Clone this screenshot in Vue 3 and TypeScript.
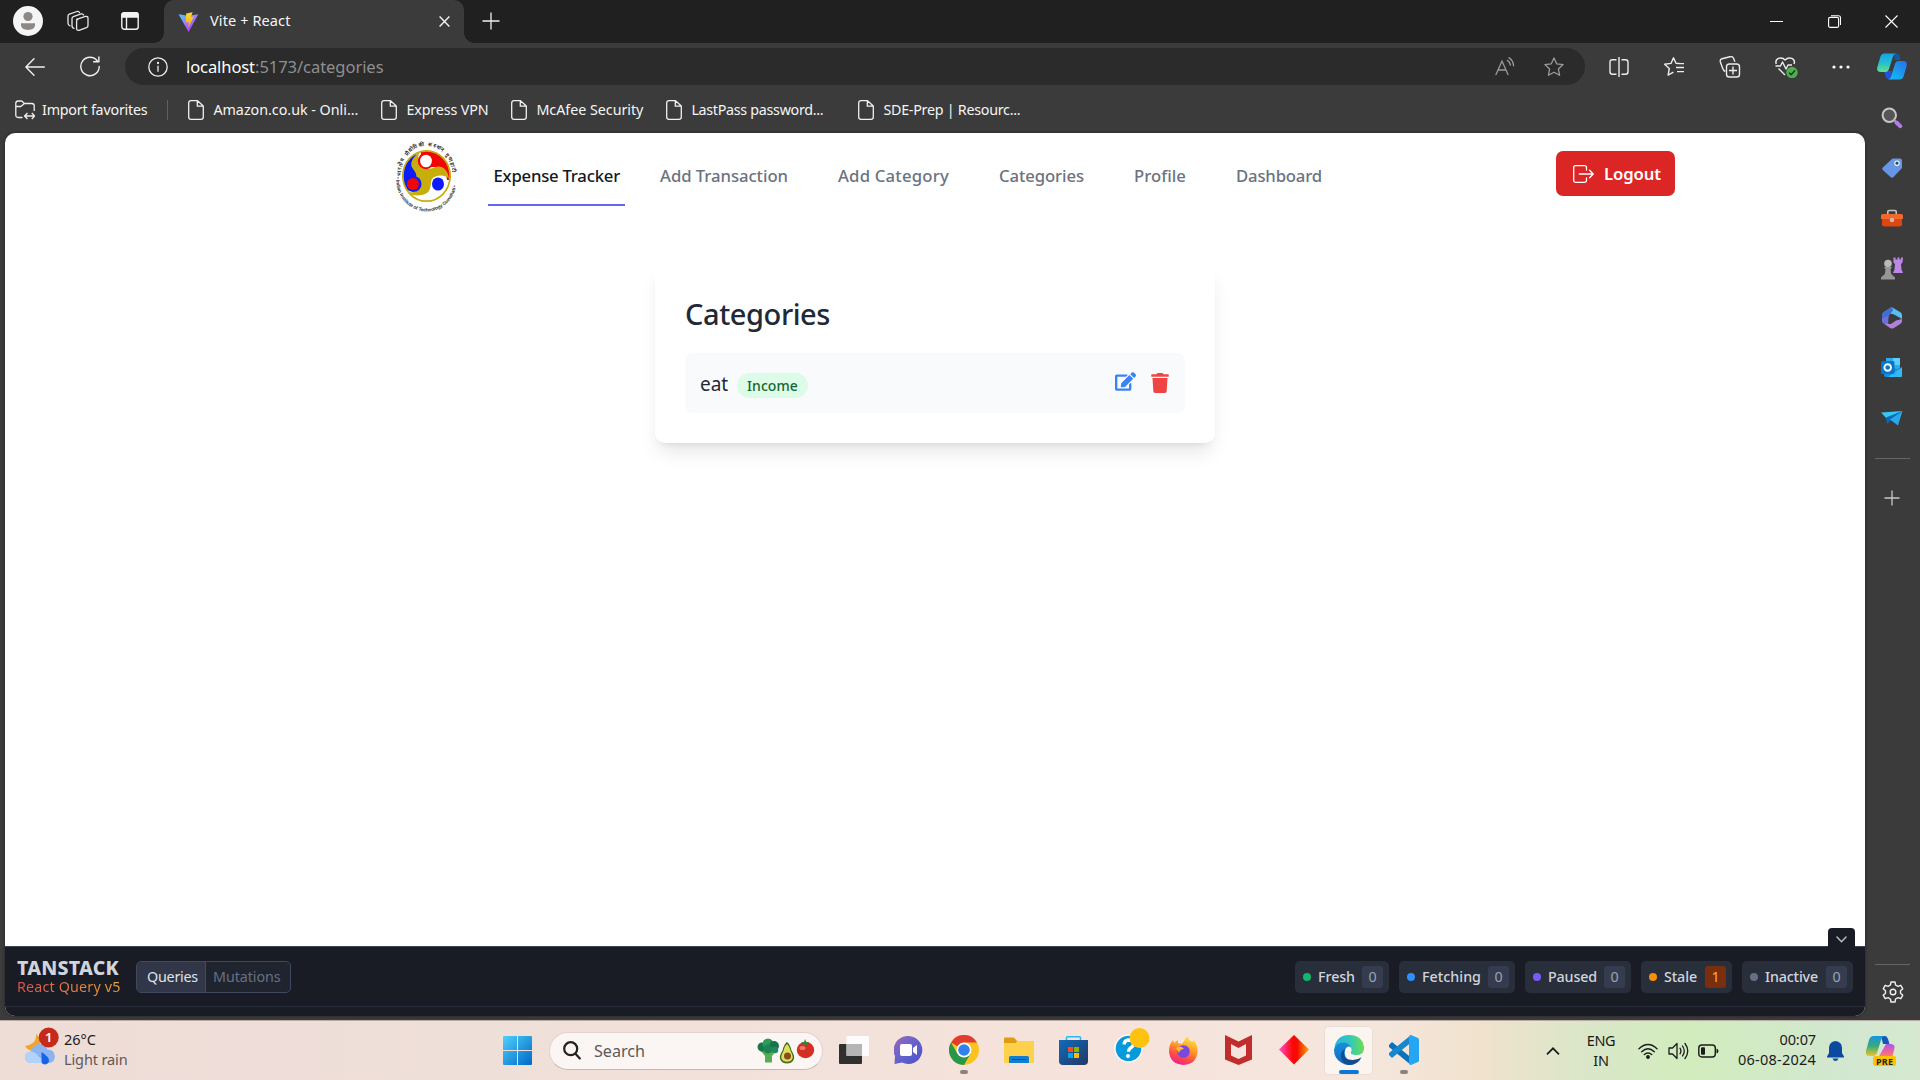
<script setup lang="ts">
import type { Directive } from 'vue'

// Spreads or tightens tracking so a label fills its design width.
const vFit: Directive<HTMLElement, number> = {
  mounted(el, { value }) {
    const width = el.getBoundingClientRect().width
    const count = (el.textContent ?? '').trim().length
    if (count > 0) el.style.letterSpacing = `${((value - width) / count).toFixed(3)}px`
  },
}

interface Label {
  text: string
  width: number
}

interface Status extends Label {
  count: number
  color: string
  box: number
}

const bookmarks: (Label & { box: number })[] = [
  { text: 'Amazon.co.uk - Onli...', width: 145, box: 193 },
  { text: 'Express VPN', width: 82, box: 130 },
  { text: 'McAfee Security', width: 107, box: 155 },
  { text: 'LastPass password...', width: 132, box: 192 },
  { text: 'SDE-Prep | Resourc...', width: 137, box: 180 },
]

const links: Label[] = [
  { text: 'Add Transaction', width: 128 },
  { text: 'Add Category', width: 111 },
  { text: 'Categories', width: 85 },
  { text: 'Profile', width: 52 },
  { text: 'Dashboard', width: 86 },
]

const statuses: Status[] = [
  { text: 'Fresh', width: 37, count: 0, color: '#12b76a', box: 94 },
  { text: 'Fetching', width: 59, count: 0, color: '#2e90fa', box: 116 },
  { text: 'Paused', width: 49, count: 0, color: '#7a5af8', box: 106 },
  { text: 'Stale', width: 33, count: 1, color: '#f79009', box: 91 },
  { text: 'Inactive', width: 53, count: 0, color: '#667085', box: 111 },
]
</script>

<template>
  <div class="screen">
    <header class="titlebar">
      <svg class="avatar" width="30" height="30" viewBox="0 0 30 30">
        <circle cx="15" cy="15" r="15" fill="#f5f5f5" />
        <circle cx="15" cy="10.5" r="4.6" fill="#8c8886" />
        <path d="M8 17.2h14v1.6c0 3.4-3.2 5.2-7 5.2s-7-1.800-7-5.200z" fill="#8c8886" />
      </svg>
      <svg class="workspaces" width="22" height="22" viewBox="0 0 22 22" fill="none" stroke="#e8e8e8" stroke-width="1.3" stroke-linejoin="round" stroke-linecap="round">
        <path d="M9.500 9.300 18.500 6.400Q21 6 21 8.200V15.500Q21 17 19.500 17.600L12 20.300Q9.700 20.700 9.600 18.500V11.200Q9.600 9.800 11 9.200" />
        <path d="M7 18.300Q5 18 5 15.800V8.600Q5 7.200 6.400 6.600L14 3.900Q16 3.500 16.600 5" />
        <path d="M3 15.900Q1 15.300 1 13.200V6.200Q1 4.800 2.400 4.200L9.900 1.500Q11.800 1.100 12.500 2.600" />
      </svg>
      <svg class="tabs-menu" width="18" height="18" viewBox="0 0 18 18" fill="none" stroke="#f2f2f2" stroke-width="1.400">
        <rect x=".8" y=".8" width="16.400" height="16.400" rx="2.500" />
        <path d="M1 1.800Q1.500 1 3 1h12q1.600 0 2 1v3H1zM5.500 5v12" fill="#f2f2f2" />
      </svg>
      <div class="tab">
        <svg class="vite" width="21" height="20" viewBox="0 0 21 20">
          <defs>
            <linearGradient id="va" x1="0" y1="0" x2=".7" y2="1"><stop stop-color="#41d1ff" /><stop offset=".5" stop-color="#9b7cff" /><stop offset="1" stop-color="#bd34fe" /></linearGradient>
            <linearGradient id="vb" x1="0" y1="0" x2="0" y2="1"><stop stop-color="#ffd83a" /><stop offset="1" stop-color="#ffa800" /></linearGradient>
          </defs>
          <path d="M.6 2.200 10 3.700 20.300 2.200 10.500 20Z" fill="url(#va)" />
          <path d="M8.200 1.500 14.600.3 12.900 5.100l3-.6-5.700 11 .5-5.400-3 .5z" fill="url(#vb)" />
        </svg>
        <span class="ui tab-title"><span v-fit="80.500">Vite + React</span></span>
        <svg width="11" height="11" viewBox="0 0 11 11" stroke="#f4f4f4" stroke-width="1.400"><path d="m.6.6 9.800 9.800M10.400.6.6 10.400" /></svg>
      </div>
      <svg class="new-tab" width="18" height="18" viewBox="0 0 18 18" stroke="#f0f0f0" stroke-width="1.300"><path d="M9 .5v17M.5 9h17" /></svg>
      <div class="window-buttons">
        <svg width="13" height="13" viewBox="0 0 13 13" stroke="#fff"><path d="M0 6.500h13" /></svg>
        <svg width="13" height="13" viewBox="0 0 13 13" stroke="#fff" fill="none" stroke-width="1.100"><rect x=".6" y="2.400" width="10" height="10" rx="1.500" /><path d="M3 .7h7.500q2 0 2 2V10" /></svg>
        <svg width="13" height="13" viewBox="0 0 13 13" stroke="#fff" stroke-width="1.100"><path d="m.5.5 12 12M12.500.5l-12 12" /></svg>
      </div>
    </header>

    <div class="browser">
      <div class="main">
        <div class="toolbar">
          <svg class="back" width="20" height="18" viewBox="0 0 20 18" fill="none" stroke="#f0f0f0" stroke-width="1.400" stroke-linecap="round" stroke-linejoin="round"><path d="M19.300 9H1M9 .8.900 9 9 17.200" /></svg>
          <svg class="reload" width="20" height="21" viewBox="0 0 20 21" fill="none" stroke="#f0f0f0" stroke-width="1.400" stroke-linecap="round" stroke-linejoin="round"><path d="M19.200 10.500A9.200 9.200 0 1 1 17.400 5M18.900.9v4.900H13.600" /></svg>
          <div class="address">
            <svg class="info" width="20" height="20" viewBox="0 0 20 20" fill="none" stroke="#ededed" stroke-width="1.300"><circle cx="10" cy="10" r="9.200" /><path d="M10 8.700v6" /><circle cx="10" cy="6" r=".5" fill="#ededed" /></svg>
            <span class="ui url"><span v-fit="69" class="host">localhost</span><span v-fit="128.500">:5173/categories</span></span>
            <svg class="read" width="20" height="19" viewBox="0 0 20 19" fill="none" stroke="#9a9a9a" stroke-width="1.300" stroke-linecap="round"><path d="M1 17.600 7 4l6 13.600M3 13h8M12.400 3.400q2.500 1.500 3 4.800M14 .8q4 2 4.600 8" /></svg>
            <svg class="star" width="20" height="20" viewBox="0 0 20 20" fill="none" stroke="#9a9a9a" stroke-width="1.300" stroke-linejoin="round"><path d="m10 1 2.700 5.800 6.400.8-4.700 4.300 1.200 6.400L10 15.200l-5.600 3.100 1.200-6.400L.9 7.600l6.400-.8z" /></svg>
          </div>
          <div class="actions">
            <svg width="22" height="22" viewBox="0 0 22 22" fill="none" stroke="#ececec" stroke-width="1.400"><path d="M11 1v20M8.500 3.700H4.500q-2.500 0-2.500 2.500v9.500q0 2.500 2.500 2.500h4M13.500 3.700h4q2.500 0 2.500 2.500v9.500q0 2.500-2.500 2.500h-4" /></svg>
            <svg width="22" height="22" viewBox="0 0 22 22" fill="none" stroke="#ececec" stroke-width="1.400" stroke-linejoin="round"><path d="M16.500 7.500 13 7.300 10.500 1.800 8 7.400l-6.400.8 4.700 4.300-1.200 6.600 5.300-3M14 7.600h7M13 11.500h8M14 15.600h7" /></svg>
            <svg width="22" height="22" viewBox="0 0 22 22" fill="none" stroke="#ececec" stroke-width="1.400"><rect x="7.500" y="8" width="13" height="13" rx="2.800" /><path d="M14 10.500v8M10 14.500h8M6.300 15.500Q4.500 14.700 3.700 12.500L1.300 5.700Q.8 3.500 3 2.700l8-2q2.500-.6 3.500 1.500l1.400 3.600" /></svg>
            <svg width="24" height="22" viewBox="0 0 24 22" fill="none" stroke="#ececec" stroke-width="1.400" stroke-linejoin="round"><path d="M2.300 8C.3 2.800 7.300-.2 11.100 4 15-.2 22 2.800 20 8M4.500 12.500 11 19M1.500 10h5l2-4 3.500 7 2-4h4" /><circle cx="18" cy="16.500" r="5.700" fill="#4caf50" stroke="none" /><path d="m15.200 16.800 2 2 3.800-4.400" stroke="#12330f" /></svg>
            <svg width="18" height="4" viewBox="0 0 18 4" fill="#fff"><circle cx="2" cy="2" r="1.600" /><circle cx="9" cy="2" r="1.600" /><circle cx="16" cy="2" r="1.600" /></svg>
          </div>
        </div>

        <div class="bookmarks">
          <svg class="folder" width="20" height="20" viewBox="0 0 20 20" fill="none" stroke="#f0f0f0" stroke-width="1.300" stroke-linejoin="round"><path d="M7.500 17.500H3.200Q.8 17.500.8 15V3.300Q.8 1 3.200 1h3.500L9.500 3.500h7.300q2.400 0 2.400 2.300V11M.8 6.500h5L9.500 3.500M10 16h9.500M12.500 13 9.600 16l2.900 3M16.800 13l2.900 3-2.900 3" /></svg>
          <span class="ui import"><span v-fit="105.500">Import favorites</span></span>
          <i class="bar"></i>
          <div v-for="b in bookmarks" :key="b.text" class="bookmark" :style="{ width: b.box + 'px' }">
            <svg width="16" height="20" viewBox="0 0 16 20" fill="none" stroke="#f0f0f0" stroke-width="1.300" stroke-linejoin="round"><path d="M3 .7h6.500L15.300 6v11q0 2.300-2.300 2.300H3Q.7 19.300.7 17V3Q.7.7 3 .7zM9.300.7v5.500h6" /></svg>
            <span class="ui"><span v-fit="b.width">{{ b.text }}</span></span>
          </div>
        </div>

        <div class="viewport">
          <nav class="nav">
            <svg class="crest" width="64" height="68" viewBox="0 0 64 68">
              <defs>
                <path id="arc-top" d="M6.500 37A25.700 27.500 0 1 1 56.500 37" />
                <path id="arc-bottom" d="M1.500 33A30.200 31.800 0 1 0 61.500 33" />
                <clipPath id="disc"><ellipse cx="31.500" cy="33" rx="24" ry="25.500" /></clipPath>
              </defs>
              <ellipse cx="31.500" cy="33" rx="24" ry="25.500" fill="#fff" />
              <g clip-path="url(#disc)">
                <path d="M28 6C16 12 18 24 24 30 30 37 24 46 16 48L2 45V5z" fill="#0b1cff" />
                <path d="M27 4h30v33h-5C51 24 45 24 38 24 30 25 23 17 27 4z" fill="#f20505" />
                <path d="M26 8C17 14 14 21 18 26 22 31 22 33 20 36 26 37 27 45 22 48 18 50 14 49 12 49 17 54 28 53 32 50 37 46 35 40 37 36 40 32 50 31 54 36 53 25 45 21 38 25 29 28 20 20 24 11z" fill="#c8ae0b" />
                <circle cx="31" cy="18" r="8.200" fill="#f20505" /><ellipse cx="31" cy="18" rx="5.900" ry="6.300" fill="#fff" />
                <circle cx="18.500" cy="41" r="8" fill="#0b1cff" /><circle cx="18" cy="41" r="6" fill="#f20505" />
                <ellipse cx="43" cy="41" rx="6" ry="6.600" fill="#0b1cff" />
              </g>
              <ellipse cx="31.500" cy="33" rx="23.600" ry="25.200" fill="none" stroke="#c8ae0b" stroke-width="1.700" />
              <text class="crest-text hindi"><textPath href="#arc-top" startOffset="4" textLength="84">भारतीय प्रौद्योगिकी संस्थान गुवाहाटी</textPath></text>
              <text class="crest-text"><textPath href="#arc-bottom" startOffset="1" textLength="94">• Indian Institute of Technology Guwahati •</textPath></text>
            </svg>
            <a class="ui link active"><span v-fit="126.500">Expense Tracker</span></a>
            <a v-for="l in links" :key="l.text" class="ui link"><span v-fit="l.width">{{ l.text }}</span></a>
            <button class="ui logout">
              <svg width="21" height="18" viewBox="0 0 21 18" fill="none" stroke="#fff" stroke-width="1.300" stroke-linecap="round" stroke-linejoin="round"><path d="M13.500 5V2.500q0-1.800-1.800-1.800H2.500Q.7.700.7 2.500v13q0 1.800 1.800 1.800h9.200q1.800 0 1.800-1.800V13M6.300 9h13.800M16.600 5.300 20.200 9l-3.600 3.700" /></svg>
              <span v-fit="57">Logout</span>
            </button>
          </nav>

          <section class="card">
            <h2 class="ui"><span v-fit="145">Categories</span></h2>
            <div class="row">
              <span class="ui name"><span v-fit="28">eat</span></span>
              <span class="ui chip"><span v-fit="51">Income</span></span>
              <svg class="edit" width="21" height="19" viewBox="0 0 576 512" fill="#3b82f6"><path d="M402.600 83.200l90.200 90.200c3.800 3.800 3.800 10 0 13.800L274.400 405.600l-92.800 10.300c-12.400 1.400-22.900-9.100-21.500-21.500l10.300-92.800L388.800 83.200c3.800-3.800 10-3.800 13.800 0zm162-22.900l-48.800-48.800c-15.200-15.200-39.900-15.200-55.200 0l-35.400 35.400c-3.800 3.800-3.800 10 0 13.800l90.200 90.200c3.800 3.800 10 3.800 13.800 0l35.400-35.400c15.200-15.300 15.200-40 0-55.200zM384 346.200V448H64V128h229.800c3.200 0 6.200-1.300 8.500-3.500l40-40c7.600-7.600 2.200-20.500-8.500-20.500H48C21.500 64 0 85.500 0 112v352c0 26.500 21.500 48 48 48h352c26.500 0 48-21.500 48-48V306.200c0-10.700-12.900-16-20.500-8.500l-40 40c-2.200 2.300-3.500 5.300-3.500 8.500z" /></svg>
              <svg width="18" height="20" viewBox="0 0 448 512" fill="#ef4444"><path d="M432 32H312l-9.400-18.700A24 24 0 0 0 281.100 0H166.800a23.720 23.720 0 0 0-21.400 13.300L136 32H16A16 16 0 0 0 0 48v32a16 16 0 0 0 16 16h416a16 16 0 0 0 16-16V48a16 16 0 0 0-16-16zM53.200 467a48 48 0 0 0 47.900 45h245.800a48 48 0 0 0 47.900-45L416 128H32z" /></svg>
            </div>
          </section>

          <footer class="devtools">
            <span class="collapse"><svg width="11" height="7" viewBox="0 0 11 7" fill="none" stroke="#b5bccb" stroke-width="1.500" stroke-linecap="round"><path d="m1 1 4.500 4.700L10 1" /></svg></span>
            <div class="dev-head">
              <div class="brand">
                <b class="ui"><span v-fit="102">TANSTACK</span></b>
                <span class="ui version"><span v-fit="103.500">React Query v5</span></span>
              </div>
              <div class="switch">
                <span class="ui on"><span v-fit="51">Queries</span></span>
                <span class="ui"><span v-fit="67.500">Mutations</span></span>
              </div>
              <div class="statuses">
                <div v-for="s in statuses" :key="s.text" class="status" :style="{ width: s.box + 'px' }">
                  <i :style="{ background: s.color }"></i>
                  <span class="ui"><span v-fit="s.width">{{ s.text }}</span></span>
                  <b class="ui" :class="{ warm: s.count > 0 }">{{ s.count }}</b>
                </div>
              </div>
            </div>
          </footer>
        </div>
      </div>

      <aside class="sidebar">
        <div class="cell first">
          <svg width="30" height="27" viewBox="0 0 30 27">
            <defs>
              <linearGradient id="ca" x1="0" y1="0" x2="0" y2="1"><stop stop-color="#15a4e8" /><stop offset=".5" stop-color="#24bdd0" /><stop offset="1" stop-color="#65e08c" /></linearGradient>
              <linearGradient id="cb" x1="1" y1="0" x2="0" y2="1"><stop stop-color="#2570e8" /><stop offset="1" stop-color="#14c0f5" /></linearGradient>
            </defs>
            <path d="M17 .5h3q2 0 2.700 2.500l1 4h-6z" fill="#125a9d" />
            <path d="M7 18h8l-2 8.500q-3.500 0-4.500-3.500z" fill="#2352dc" />
            <path d="M7.500.5H19q-2 0-3 3l-4 12.500q-1 3-3.500 3H4q-5 0-3.500-5.500L3.300 4q1-3.500 4.200-3.500z" fill="url(#ca)" />
            <path d="M22.500 26.500H11q2 0 3-3L18 11q1-3 3.500-3H26q5 0 3.500 5.500L26.700 23q-1 3.500-4.200 3.500z" fill="url(#cb)" />
          </svg>
        </div>
        <div class="cell"><svg width="22" height="22" viewBox="0 0 22 22" fill="none"><circle cx="8.300" cy="8.300" r="6.700" fill="#555" stroke="#c6c6c6" stroke-width="2" /><path d="m13 13 2 2" stroke="#aaa" stroke-width="2" /><path d="m15.500 15.500 3.700 3.700" stroke="#b17de8" stroke-width="4" stroke-linecap="round" /></svg></div>
        <div class="cell"><svg width="22" height="22" viewBox="0 0 22 22"><path d="M11.500 1.500H19q2 0 2 2V11l-8.500 9q-1.500 1.500-3 0L1.800 13q-1.300-1.200 0-2.500z" fill="#6696e4" /><circle cx="16" cy="6.200" r="2.200" fill="#28476f" stroke="#fff" stroke-width="1.100" /></svg></div>
        <div class="cell"><svg width="22" height="18" viewBox="0 0 22 18"><path d="M6.800 6V2.500Q6.800 1.500 8 1.500h6q1.200 0 1.200 1V6" fill="none" stroke="#c4c4c4" stroke-width="1.600" /><path d="M1.500 5h19q1.500 0 1.500 1.500V10H0V6.500Q0 5 1.500 5z" fill="#f0682b" /><path d="M1 10h20v5.500q0 2-2 2H3q-2 0-2-2z" fill="#dc4712" /><circle cx="11" cy="11" r="2.300" fill="#d7b5a4" /></svg></div>
        <div class="cell"><svg width="22" height="23" viewBox="0 0 22 23"><path d="M12.500.5h2v2h2v-2h2v2h1.500v-2h2l-.5 5-1.500 1.500.5 5.500 1.500 3.500H12l1.500-3.500.5-5.500-1.500-1.500z" fill="#bd87ea" /><circle cx="7" cy="6.500" r="3.800" fill="#b9b9b9" /><path d="M3 10h8l-1.500 2.500.7 4.500 3.800 3.500v2H0v-2L3.800 17l.7-4.500z" fill="#969696" /></svg></div>
        <div class="cell"><svg width="22" height="22" viewBox="0 0 22 22"><path d="M10.500 0 19 5q2 1.200 2 3v4L14 8 9 6.500z" fill="#56bff0" /><path d="M10.500 0 12 3 8 8.500 7 17l-4.500-.5Q1 15.500 1 14V8q0-2 1.800-3z" fill="#6f6ddb" /><path d="M10.500 0 12 3 8 8.500 1 11V8q0-2 1.800-3z" fill="#3c6fd0" /><path d="M21 12v2q0 2-1.800 3l-6.700 4.200q-1.500.8-3 0L2.500 16.500 10 17l5-3.500z" fill="#ae81db" /><path d="m8 8.500 3-1.800 3.800 2.200V13L11 15.300 7.500 13z" fill="#3b3b3b" /></svg></div>
        <div class="cell"><svg width="22" height="22" viewBox="0 0 22 22"><path d="M5 1h14v10l-8 5-6-5z" fill="#32a9e8" /><path d="M12 1h7v7h-7z" fill="#57d3fa" /><path d="M3 9l18 4v7H5q-2 0-2-2z" fill="#1490df" /><path d="m21 10-14 10h12.500q1.500 0 1.500-1.500z" fill="#35b8f1" /><rect x="0" y="4" width="13.500" height="13" rx="1.500" fill="#0875cd" /><circle cx="6.700" cy="10.500" r="3.300" fill="none" stroke="#fff" stroke-width="1.900" /></svg></div>
        <div class="cell"><svg width="22" height="18" viewBox="0 0 22 18"><path d="M0 3.500 21.500 2 6 10z" fill="#35c7f6" /><path d="M5 8.500 21.500 2 8 13l-2 2z" fill="#0b68b5" /><path d="m9 10.500 12.500-8.500L17 16.500z" fill="#28a8ea" /></svg></div>
        <i class="rule"></i>
        <div class="cell"><svg width="16" height="16" viewBox="0 0 16 16" stroke="#c9c9c9" stroke-width="1.300"><path d="M8 .5v15M.5 8h15" /></svg></div>
        <i class="rule bottom"></i>
        <div class="gear"><svg width="22" height="22" viewBox="0 0 22 22" fill="none" stroke="#f0f0f0" stroke-width="1.400" stroke-linejoin="round"><path d="M9 1h4l.6 3 2.300 1.300 2.900-1 2 3.500-2.300 2v2.400l2.300 2-2 3.500-2.900-1L13.600 18 13 21H9l-.6-3-2.300-1.300-2.900 1-2-3.500 2.300-2V9.800l-2.300-2 2-3.500 2.900 1L8.400 4z" /><circle cx="11" cy="11" r="2.800" /></svg></div>
      </aside>
    </div>

    <div class="taskbar">
      <div class="weather">
        <svg width="34" height="38" viewBox="0 0 34 38">
          <path d="M11 7Q12 17 0 19q3 5 8 4.500Q16 21 15 13q-1-4-4-6z" fill="#f5a425" />
          <path d="M6 36q-6-.5-6-6 .5-5 6-5.500Q8 17 15 17q6 .5 7.500 5.500 7 0 7.500 7-.5 6-6 6.500z" fill="#8db4f0" />
          <path d="M6 36q-6-.5-6-6 .5-4 4-5 6-1 9 4 4 4 8 2l-1 5z" fill="#b3d2fa" />
          <path d="M16.500 25q8 5 7.500 9-1 3.500-4.500 3.500-3-.5-3-3.500z" fill="#1763ea" />
          <circle cx="23.700" cy="10.500" r="10" fill="#c42b1c" />
          <text x="23.700" y="15.300" text-anchor="middle" class="badge">1</text>
        </svg>
        <div class="ui"><span v-fit="32">26°C</span><span v-fit="63.500" class="dim">Light rain</span></div>
      </div>
      <div class="apps">
        <svg class="start" width="29" height="29" viewBox="0 0 29 29"><defs><linearGradient id="w" x1="0" y1="0" x2="1" y2="1"><stop stop-color="#4fd0fb" /><stop offset="1" stop-color="#0067c8" /></linearGradient></defs><path d="M1 0h13v14H0V1Q0 0 1 0zM15 0h13q1 0 1 1v13H15zM0 15h14v14H1q-1 0-1-1zM15 15h14v13q0 1-1 1H15z" fill="url(#w)" /></svg>
        <div class="search">
          <svg width="18" height="19" viewBox="0 0 18 19" fill="none" stroke="#222" stroke-width="2.200" stroke-linecap="round"><circle cx="7.700" cy="7.700" r="6.500" /><path d="m12.500 12.700 4.300 4.700" /></svg>
          <span class="ui"><span v-fit="51">Search</span></span>
          <svg class="food" width="59" height="26" viewBox="0 0 59 26">
            <path d="M8 11h7l5 1-5 6v6.500H8V18L3 12z" fill="#58ad54" />
            <circle cx="5" cy="9" r="4.500" fill="#16784c" /><circle cx="11" cy="6" r="5.500" fill="#2c9a58" /><circle cx="17" cy="8" r="5" fill="#167350" /><circle cx="11" cy="11" r="4.500" fill="#1c8454" /><circle cx="18" cy="12" r="3.200" fill="#24895a" />
            <path d="M30 4q3 2 4.500 8.500 4 6 2 9.500-2 3.500-6.500 3.500T23.500 22q-2-3.500 2-9.500Q27 6 30 4z" fill="#3f6e1c" /><path d="M30 6q2.500 2 3.500 7 3 5 2 7.500-1.500 3.200-5.500 3.200t-5.500-3.200q-1-2.500 2-7.500 1-5 3.500-7z" fill="#e1dc5f" /><circle cx="30.500" cy="18" r="3.500" fill="#8b4a19" />
            <ellipse cx="48.500" cy="12" rx="8.700" ry="8.200" fill="#d32f24" /><ellipse cx="45.500" cy="10" rx="3" ry="2" fill="#f0766a" /><path d="m48 1 1.200 3 3 .5-2.500 1 .8 2-2.500-1.200-3 1.200 1.500-2.300-2.500-1 3-.2z" fill="#2b8b3b" />
          </svg>
        </div>
        <div class="app"><svg width="30" height="29" viewBox="0 0 30 29"><rect y="8" width="23" height="20" rx="1" fill="#30302f" /><rect x="7.500" y="0" width="22.500" height="20" rx="1" fill="#fff" fill-opacity=".88" /><rect x="7.500" y="8" width="15.500" height="12" fill="#b5b5b5" /></svg></div>
        <div class="app"><svg width="29" height="29" viewBox="0 0 29 29"><defs><linearGradient id="tm" x1="0" y1="0" x2="1" y2="1"><stop stop-color="#9b68bb" /><stop offset=".5" stop-color="#6563cb" /><stop offset="1" stop-color="#4851c7" /></linearGradient></defs><path d="M14.500 0A14 14 0 1 1 8 26.500L.5 28 1 20A14 14 0 0 1 14.500 0z" fill="url(#tm)" /><rect x="6" y="8" width="12" height="12" rx="2" fill="#fff" /><path d="m19 12 4-3v10l-4-3z" fill="#fff" /></svg></div>
        <div class="app"><svg width="30" height="30" viewBox="0 0 30 30"><circle cx="15" cy="15" r="15" fill="#fcc31e" /><path d="M15 15 2 7.500A15 15 0 0 1 28 7.500H15z" fill="#e33b2e" /><path d="M2 7.500A15 15 0 0 0 15 30l6.500-11.200L15 15 8.500 18.700z" fill="#279847" /><circle cx="15" cy="15" r="7.500" fill="#fff" /><circle cx="15" cy="15" r="5.800" fill="#3180f0" /></svg><i class="dot"></i></div>
        <div class="app"><svg width="30" height="27" viewBox="0 0 30 27"><path d="M0 1.500Q0 .5 1.500.5H10l3 3.500H29q1 0 1 1v5H0z" fill="#dc9e10" /><path d="M0 6h11.500l2-2H29q1 0 1 1v20q0 1-1 1H1q-1 0-1-1z" fill="#ffd04a" /><path d="M5 26v-5.500q0-1.500 1.500-1.500h17q1.500 0 1.500 1.500V26z" fill="#0e7fd3" /><path d="M8 22.500h14" stroke="#0a4e91" /></svg></div>
        <div class="app"><svg width="29" height="29" viewBox="0 0 29 29"><defs><linearGradient id="st" x1="0" y1="0" x2="1" y2="1"><stop stop-color="#106bbd" /><stop offset="1" stop-color="#243762" /></linearGradient></defs><path d="M7.500 6V1.500Q7.500.8 8.500.8h12q1 0 1 .7V6" fill="none" stroke="#28bdf2" stroke-width="1.600" /><path d="M0 4h29v21q0 4-4 4H4q-4 0-4-4z" fill="url(#st)" /><path d="M9 11h5v5H9z" fill="#f25022" /><path d="M15 11h5v5h-5z" fill="#7fba00" /><path d="M9 17h5v5H9z" fill="#00a4ef" /><path d="M15 17h5v5h-5z" fill="#ffb900" /></svg></div>
        <div class="app"><svg class="help" width="36" height="36" viewBox="0 0 36 36"><circle cx="14.500" cy="20.500" r="14" fill="#fff" /><circle cx="14.500" cy="20.500" r="12.800" fill="#069add" /><path d="M10 16.500q.5-4.500 5-4.500 4.500.3 4.500 4 0 2-2.500 3.700-2.500 1.600-2.500 4" fill="none" stroke="#fff" stroke-width="3.300" /><circle cx="14" cy="28" r="2" fill="#fff" /><circle cx="25.500" cy="10" r="10" fill="#ffc20e" /></svg></div>
        <div class="app"><svg width="29" height="29" viewBox="0 0 29 29"><defs><linearGradient id="ff" x1=".8" y1="0" x2=".4" y2="1"><stop stop-color="#fff04d" /><stop offset=".45" stop-color="#ff9826" /><stop offset=".75" stop-color="#ff4b46" /><stop offset="1" stop-color="#ee238b" /></linearGradient></defs><path d="M18 0q1 3.500 5 6l2-2q4 6 3.500 11.500-.7 12.500-14 13.500Q1 28 0 15.500 0 8 4 4l1 3q2-2 4-3v3l4 1q3-4 5-8z" fill="url(#ff)" /><circle cx="14.500" cy="15.500" r="6.300" fill="#7848df" /><path d="M7 12q5-3 8 1-4 0-5 4z" fill="#ffb632" /></svg></div>
        <div class="app"><svg width="27" height="30" viewBox="0 0 27 30"><path d="m0 0 13.500 6.500L27 0v24.500L13.500 30 0 24.500zM6 9v11.500l7.500 3.500 7.500-3.500V9l-7.500 4z" fill="#c12d2d" fill-rule="evenodd" /></svg></div>
        <div class="app"><svg width="30" height="30" viewBox="0 0 30 30"><defs><linearGradient id="di"><stop stop-color="#ff4ec9" /><stop offset=".45" stop-color="#ff0707" /><stop offset=".6" stop-color="#f20b00" /><stop offset="1" stop-color="#ffa800" /></linearGradient></defs><path d="m15 0 15 14.500L15 29.500 0 14.500z" fill="url(#di)" /></svg></div>
        <div class="app current"><svg width="30" height="30" viewBox="0 0 30 30"><defs><linearGradient id="ea"><stop stop-color="#27b4e5" /><stop offset=".55" stop-color="#35c9b8" /><stop offset="1" stop-color="#6bdf4b" /></linearGradient><linearGradient id="eb" x1="0" y1="0" x2="0" y2="1"><stop stop-color="#178fdc" /><stop offset="1" stop-color="#1169be" /></linearGradient></defs><path d="M.5 12Q3 0 15 0 28 0 30 12q.5 8-8 8-6-.2-5-3 1.500-3-1-5.500Q8 6 .5 12z" fill="url(#ea)" /><path d="M0 15Q1 8 9 7.500q6 0 8 5-3-2.500-5.500 1.500Q9 20 14 25q4 3 7.500 3.500Q14 32 7 27.500 0 23 0 15z" fill="url(#eb)" /><path d="M11 14q-4 11 8 11 5 0 8.500-2.700Q24 30 15 30q-8-1-8-9 0-5 4-7z" fill="#124c91" /></svg><i class="dot"></i></div>
        <div class="app"><svg width="30" height="30" viewBox="0 0 30 30"><path d="m0 10 3-3 19 15.500V30L0 12z" fill="#0873b8" /><path d="m0 20 3 3L22 7.500V0L0 18z" fill="#1687d1" /><path d="m22 0 7 3q1 .5 1 1.500v21q0 1-1 1.500l-7 3-2-1V1z" fill="#25a6f2" /></svg><i class="dot"></i></div>
      </div>
      <div class="tray">
        <svg class="up" width="14" height="8" viewBox="0 0 14 8" fill="none" stroke="#1b1b1b" stroke-width="1.700"><path d="m1 7.300 6-6 6 6" /></svg>
        <div class="ui lang"><span v-fit="28.500">ENG</span><span v-fit="15.500">IN</span></div>
        <svg class="wifi" width="20" height="16" viewBox="0 0 20 16" fill="none" stroke="#1b1b1b" stroke-width="1.400" stroke-linecap="round"><path d="M1 5.700Q10-2.500 19 5.700M3.700 8.700q6.300-5.700 12.600 0M6.300 11.600q3.700-3.300 7.400 0" /><circle cx="10" cy="14" r="1.200" fill="#1b1b1b" /></svg>
        <svg class="volume" width="21" height="18" viewBox="0 0 21 18" fill="none" stroke="#1b1b1b" stroke-width="1.300" stroke-linecap="round" stroke-linejoin="round"><path d="M1 6h3.500L9 1.500v15L4.500 12H1zM12 6.200q1.800 2.800 0 5.600M14.500 4q3.500 5 0 10M17 1.500q5.500 7.500 0 15" /></svg>
        <svg class="battery" width="21" height="14" viewBox="0 0 21 14"><rect x=".8" y="1" width="16.500" height="12" rx="3" fill="none" stroke="#1b1b1b" stroke-width="1.400" /><rect x="3" y="3.200" width="4" height="7.600" rx="1" fill="#1b1b1b" /><path d="M18.500 4.500q2 .5 2 2.500t-2 2.500z" fill="#1b1b1b" /></svg>
        <div class="ui clock"><span v-fit="36.500">00:07</span><span v-fit="78">06-08-2024</span></div>
        <svg class="bell" width="17" height="20" viewBox="0 0 17 20" fill="#0b4a9e"><path d="M8.500 0Q15 .8 15 7v5l2 3.500v1H0v-1L2 12V7Q2 .8 8.500 0zM5.500 17.500h6q-1 2.500-3 2.500t-3-2.500z" /></svg>
        <svg class="pre" width="30" height="30" viewBox="0 0 30 30">
          <defs>
            <linearGradient id="pa" x1="0" y1="0" x2="0" y2="1"><stop stop-color="#1695e2" /><stop offset=".5" stop-color="#36aa79" /><stop offset="1" stop-color="#f1c32c" /></linearGradient>
            <linearGradient id="pb" x1="0" y1="0" x2="0" y2="1"><stop stop-color="#a65af0" /><stop offset=".5" stop-color="#ec609f" /><stop offset="1" stop-color="#f98b61" /></linearGradient>
          </defs>
          <path d="M15 0h4q2 0 3 3l1.500 5H17z" fill="#1459ba" /><path d="M7 0h11q-2 1-3 4l-4 13q-1 3-4 3H3q-4-.5-3-5L3 4Q4 .5 7 0z" fill="url(#pa)" /><path d="M20 8h5q5 .5 3 6l-2 8H12z" fill="url(#pb)" />
          <rect x="7" y="20" width="23" height="10" rx="2" fill="#fdc300" /><text x="18.500" y="28.500" text-anchor="middle" textLength="17" class="pre-text">PRE</text>
        </svg>
      </div>
    </div>
  </div>
</template>

<style>
body { margin: 0; overflow: hidden; }
</style>

<style scoped>
* { box-sizing: border-box; }
svg { display: block; flex: none; }
.screen { width: 1920px; height: 1080px; display: flex; flex-direction: column; background: #3b3b3b; overflow: hidden; }
.ui { font-family: "Noto Sans", "Open Sans", sans-serif; white-space: nowrap; flex: none; }
.ui > span { display: inline-block; }

.titlebar { height: 43px; flex: none; background: #202020; display: flex; align-items: center; padding-bottom: 1px; }
.avatar { margin-left: 13px; }
.workspaces { margin-left: 24px; }
.tabs-menu { margin-left: 32px; }
.tab { width: 300px; height: 43px; margin: 1px 0 0 25px; background: #3b3b3b; border-radius: 10px 10px 0 0; display: flex; align-items: center; padding-left: 14px; color: #f5f5f5; position: relative; }
.tab::before, .tab::after { content: ""; position: absolute; bottom: 0; width: 10px; height: 10px; }
.tab::before { left: -10px; background: radial-gradient(circle at 0 0, #202020 9.500px, #3b3b3b 10px); }
.tab::after { right: -10px; background: radial-gradient(circle at 100% 0, #202020 9.500px, #3b3b3b 10px); }
.tab-title { font-size: 14.500px; margin-left: 11px; width: 229px; margin-top: -3px; }
.new-tab { margin-left: 17.500px; margin-top: -1px; }
.window-buttons { margin-left: auto; display: flex; gap: 44.500px; padding-right: 22px; }

.browser { flex: 1; min-height: 0; display: flex; }
.main { width: 1865px; flex: none; display: flex; flex-direction: column; }
.toolbar { height: 47px; display: flex; align-items: center; }
.back { margin-left: 25px; }
.reload { margin-left: 35px; }
.address { width: 1460px; height: 37px; margin-left: 25px; border-radius: 19px; background: #2b2b2b; display: flex; align-items: center; padding-left: 23px; }
.url { font-size: 16.500px; margin-left: 18px; color: #8f8f8f; width: 1309px; margin-top: -1px; }
.url .host { color: #fff; }
.star { margin-left: 29px; }
.actions { display: flex; align-items: center; gap: 33.400px; margin-left: 23px; }
.bookmarks { height: 43px; display: flex; align-items: center; padding: 0 0 4px 15px; color: #f5f5f5; font-size: 14.300px; }
.import { margin-left: 7px; width: 125px; }
.bar { width: 1px; height: 20px; background: #606060; }
.bookmark { display: flex; align-items: center; gap: 9.400px; }
.bar + .bookmark { margin-left: 20px; }

.viewport { height: 883px; margin-left: 5px; background: #fff; border-radius: 10px; display: flex; flex-direction: column; box-shadow: 0 0 3px #222; }
.nav { width: 1280px; height: 80px; margin-left: 390px; display: flex; align-items: center; padding-bottom: 7px; }
.crest { margin: 14px 29px 0 0; overflow: visible; }
.crest-text { font: 700 4.800px "Liberation Sans", sans-serif; fill: #333; }
.hindi { font-size: 5.200px; }
.link { font-size: 16.700px; font-weight: 500; color: #6b7280; padding: 0 10px; margin: 12px 30px 0 0; height: 60px; line-height: 59px; }
.link.active { width: 137px; color: #111827; padding: 0 5.500px; margin-right: 25px; border-bottom: 2px solid #6366f1; }
.link:last-of-type { margin-right: 0; }
.logout { margin: 7px 0 0 auto; width: 119px; height: 45px; border: 0; border-radius: 7px; background: #dc2626; color: #fff; font-size: 16.700px; font-weight: 600; display: flex; align-items: center; gap: 10px; padding: 1px 0 0 17px; }
.card { width: 560px; height: 180px; margin: 50px auto 0; padding: 30px; border-radius: 10px; box-shadow: 0 12.500px 19px -4px rgba(0, 0, 0, .1), 0 5px 7.500px -5px rgba(0, 0, 0, .1); }
.card h2 { margin: 0 0 20px; font-size: 29px; line-height: 42px; height: 40px; font-weight: 500; color: #1f2937; }
.row { height: 60px; background: #f9fafb; border-radius: 8px; display: flex; align-items: center; padding: 0 16px 0 15px; }
.name { color: #1f2937; font-size: 19px; width: 37px; line-height: 60px; margin-top: 2px; }
.chip { height: 25px; width: 71px; margin-top: 5px; border-radius: 13px; padding-left: 10px; background: #dcfce7; color: #166534; font-size: 14px; font-weight: 500; line-height: 25px; }
.edit { margin: 0 15px 3px auto; }

.devtools { position: relative; height: 70px; margin-top: auto; background: #191c24; border-top: 1px solid #3b425a; border-radius: 0 0 10px 10px; }
.collapse { position: absolute; right: 10px; top: -19px; width: 27px; height: 19px; background: #191c24; border-radius: 4px 4px 0 0; display: flex; align-items: center; justify-content: center; padding-top: 3px; }
.dev-head { height: 60px; border-bottom: 1px solid #292e3d; display: flex; align-items: center; padding: 0 12px; }
.brand { width: 119px; display: flex; flex-direction: column; }
.brand b { font-size: 19.500px; line-height: 20px; font-weight: 800; color: #d0d5dd; }
.version { font-size: 14.300px; line-height: 18px; }
.version span { color: transparent; background: linear-gradient(90deg, #dd524b, #e9a03b); background-clip: text; }
.switch { width: 155px; height: 32px; border: 1px solid #414962; border-radius: 5px; display: flex; overflow: hidden; font-size: 14.300px; line-height: 30px; background: #20242f; color: #667085; }
.switch > span { padding-left: 7px; }
.switch .on { width: 69px; padding-left: 10px; background: #313749; border-right: 1px solid #414962; color: #dfe3ea; }
.statuses { margin-left: auto; display: flex; gap: 10px; }
.status { height: 32px; border-radius: 5px; background: #292e3b; color: #d0d5dd; font-size: 14.300px; font-weight: 500; display: flex; align-items: center; padding: 0 6px 0 8px; }
.status i { width: 8px; height: 8px; border-radius: 50%; margin-right: 7px; }
.status b { margin-left: auto; width: 21px; height: 22px; line-height: 22px; text-align: center; border-radius: 3px; background: #363c50; color: #98a2b3; font-weight: 400; }
.status b.warm { background: #7a2e0e; color: #fdb022; }

.sidebar { flex: 1; display: flex; flex-direction: column; align-items: center; }
.cell { height: 50px; width: 55px; display: flex; align-items: center; justify-content: center; padding-right: 1px; }
.cell.first { padding-bottom: 4px; }
.rule { width: 35px; height: 1px; background: #656565; margin: 15px 0 14px; }
.rule.bottom { margin: auto 0 16px; }
.gear { height: 39px; }

.taskbar { height: 60px; flex: none; border-top: 1px solid #b8aaa5; display: flex; background: linear-gradient(90deg, #eedcd7 0%, #efdfd9 25%, #f6e4dc 60%, #f5e6dc 72%, #f0e2cd 77%, #d9e7c8 83%, #d2ecbd 88%, #d2e7d0 96%, #d6e9d0 100%); }
.weather { width: 503px; padding: 6px 0 0 25px; display: flex; gap: 5px; }
.weather .ui { font-size: 14.500px; line-height: 20px; display: flex; flex-direction: column; align-items: flex-start; color: #1d1d1d; padding-top: 2px; }
.dim { color: #5f5957; }
.badge { font: 600 13px "Noto Sans", sans-serif; fill: #fff; }
.apps { display: flex; align-items: center; }
.search { width: 274px; height: 38px; margin: 0 3px 0 17px; border-radius: 19px; background: #fbf6f4; border: 1px solid #e2d2cd; border-bottom-color: #c5b8b4; display: flex; align-items: center; padding: 0 6px 0 13px; color: #5c5a59; font-size: 16.200px; }
.search .ui { margin-left: 13px; }
.food { margin-left: auto; }
.app { width: 55px; height: 59px; display: flex; align-items: center; justify-content: center; position: relative; padding-bottom: 1px; }
.help { margin: -8px 0 0 7px; }
.dot { position: absolute; bottom: 6px; width: 8px; height: 4px; border-radius: 2px; background: #8a827d; }
.current { width: 49px; height: 49px; margin: 0 3px; background: #fbf4ef; border-radius: 5px; border: 1px solid #eadfd8; }
.current .dot { width: 20px; bottom: 0; background: #0a78d4; }
.tray { margin-left: auto; display: flex; align-items: center; padding-right: 24px; color: #1b1b1b; font-size: 14.500px; line-height: 20px; }
.lang { width: 28px; margin: -2px 0 0 27px; display: flex; flex-direction: column; align-items: center; }
.wifi { margin-left: 23px; }
.volume { margin-left: 10px; }
.battery { margin-left: 9px; }
.clock { width: 97px; display: flex; flex-direction: column; align-items: flex-end; margin-top: -3px; }
.bell { margin-left: 11px; }
.pre { margin-left: 22px; }
.pre-text { font: 700 9px "Noto Sans", sans-serif; fill: #222; }
</style>
